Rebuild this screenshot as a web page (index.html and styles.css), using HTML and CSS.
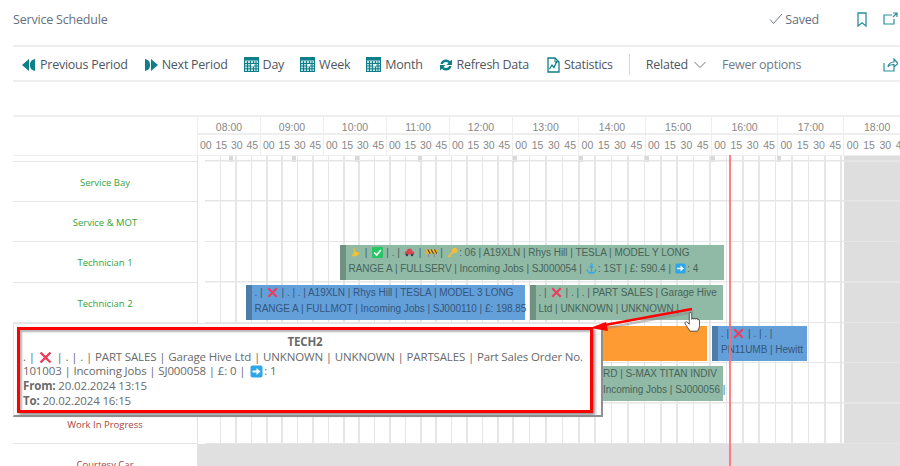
FILE: index.html
```html
<!DOCTYPE html>
<html lang="en">
<head>
    <meta charset="UTF-8">
    <meta name="viewport" content="width=device-width, initial-scale=1.0">
    <title>Service Schedule</title>
    <link rel="stylesheet" href="styles.css">
</head>
<body>
    <svg class="defs" width="0" height="0">
        <symbol id="i-cal" viewBox="0 0 15 15">
            <rect x="0.5" y="0.5" width="14" height="14" fill="#bfe0e2" stroke="#0e7f88"/>
            <rect x="0.5" y="0.5" width="14" height="3" fill="#0e7f88"/>
            <path d="M3.5 4v10M6.5 4v10M9.5 4v10M12 4v10M1 6.5h13M1 9h13M1 11.8h13" stroke="#0e7f88" stroke-width="1"/>
            <rect x="7" y="7" width="3" height="2.4" fill="#fff"/>
        </symbol>
        <symbol id="i-x" viewBox="0 0 13 13">
            <path d="M1.5 1.5l10 10M11.5 1.5l-10 10" stroke="#ef3b5c" stroke-width="2.4" fill="none"/>
        </symbol>
        <symbol id="i-go" viewBox="0 0 13 13">
            <rect x="0.5" y="0.5" width="12" height="12" rx="2" fill="#2ea6ea"/>
            <path d="M2.5 5.5h4V3l4 3.5-4 3.5V7.500h-4z" fill="#fff"/>
        </symbol>
    </svg>

    <div class="titlebar">
        <span class="page-title">Service Schedule</span>
        <span class="saved">
            <svg width="14" height="12" viewBox="0 0 14 12"><path d="M1 6.500l3.500 4L13 1" fill="none" stroke="#6d7784" stroke-width="1"/></svg>
            Saved
        </span>
        <svg class="top-icon" width="10" height="15" viewBox="0 0 10 15"><path d="M1 1h8v13L5 10.800 1 14z" fill="none" stroke="#2a8f99" stroke-width="1.300"/></svg>
        <svg class="top-icon last" width="15" height="14" viewBox="0 0 15 14"><path d="M9 3H1v9h10V7M10 1h4v4M14 1l-4 4" fill="none" stroke="#2a8f99" stroke-width="1.200"/></svg>
    </div>

    <div class="toolbar">
        <span class="tool"><svg width="14" height="12" viewBox="0 0 14 12"><path d="M7 0v12L0 6zM13 0v12c-4-1-5-3-5-6s1-5 5-6z" fill="#0e7f88"/></svg>Previous Period</span>
        <span class="tool"><svg width="14" height="12" viewBox="0 0 14 12"><path d="M7 0v12l7-6zM1 0v12c4-1 5-3 5-6S5 1 1 0z" fill="#0e7f88"/></svg>Next Period</span>
        <span class="tool"><svg width="15" height="15"><use href="#i-cal"/></svg>Day</span>
        <span class="tool"><svg width="15" height="15"><use href="#i-cal"/></svg>Week</span>
        <span class="tool"><svg width="15" height="15"><use href="#i-cal"/></svg>Month</span>
        <span class="tool"><svg width="14" height="14" viewBox="0 0 14 14"><path d="M1.500 6C2 3 4.300 1.500 7 1.500c1.700 0 3 .7 4 1.800L13 1.500V7H7.500l2-2C8.800 4.300 8 4 7 4 5.500 4 4.300 4.800 3.800 6zM12.500 8C12 11 9.700 12.500 7 12.500c-1.700 0-3-.7-4-1.800L1 12.500V7h5.500l-2 2c.7.700 1.500 1 2.500 1 1.500 0 2.700-.8 3.200-2z" fill="#0e7f88"/></svg>Refresh Data</span>
        <span class="tool stats"><svg width="13" height="16" viewBox="0 0 13 16"><path d="M1 1h7l4 4v10H1z" fill="#fff" stroke="#0e7f88" stroke-width="1.300"/><path d="M8 1v4h4" fill="none" stroke="#0e7f88"/><path d="M2.500 12l2.500-4 2 2.500L10 4" fill="none" stroke="#0e7f88" stroke-width="1.300"/></svg>Statistics</span>
        <span class="sep"></span>
        <span class="tool">Related<svg class="chev" width="12" height="7" viewBox="0 0 12 7"><path d="M.5 1L6 6.500 11.500 1" fill="none" stroke="#6d7784"/></svg></span>
        <span class="tool muted">Fewer options</span>
        <svg class="share" width="15" height="14" viewBox="0 0 15 14"><path d="M1 5v8h10V9M5 9c0-3 3-5 6-5V1l4 4.500L11 9V6.500C8.500 6.500 6 7 5 9z" fill="none" stroke="#2a8f99" stroke-width="1.200"/></svg>
    </div>

    <div class="schedule">
        <div class="sched-head">
            <div class="head-blank"></div>
            <div class="hour"><b>08:00</b><div class="mins"><i>00</i><i>15</i><i>30</i><i>45</i></div></div>
            <div class="hour"><b>09:00</b><div class="mins"><i>00</i><i>15</i><i>30</i><i>45</i></div></div>
            <div class="hour"><b>10:00</b><div class="mins"><i>00</i><i>15</i><i>30</i><i>45</i></div></div>
            <div class="hour"><b>11:00</b><div class="mins"><i>00</i><i>15</i><i>30</i><i>45</i></div></div>
            <div class="hour"><b>12:00</b><div class="mins"><i>00</i><i>15</i><i>30</i><i>45</i></div></div>
            <div class="hour wide"><b>13:00</b><div class="mins"><i>00</i><i>15</i><i>30</i><i>45</i></div></div>
            <div class="hour wide"><b>14:00</b><div class="mins"><i>00</i><i>15</i><i>30</i><i>45</i></div></div>
            <div class="hour wide"><b>15:00</b><div class="mins"><i>00</i><i>15</i><i>30</i><i>45</i></div></div>
            <div class="hour wide"><b>16:00</b><div class="mins"><i>00</i><i>15</i><i>30</i><i>45</i></div></div>
            <div class="hour wide"><b>17:00</b><div class="mins"><i>00</i><i>15</i><i>30</i><i>45</i></div></div>
            <div class="hour wide"><b>18:00</b><div class="mins"><i>00</i><i>15</i><i>30</i><i>45</i></div></div>
        </div>
        <div class="strip">
            <div class="strip-label"></div>
            <div class="strip-track"></div>
        </div>

        <div class="row">
            <div class="res green">Service Bay</div>
            <div class="track"></div>
        </div>
        <div class="row">
            <div class="res green">Service &amp; MOT</div>
            <div class="track"></div>
        </div>
        <div class="row">
            <div class="res green">Technician 1</div>
            <div class="track">
                <div class="job sage j-tech1">
                    <svg class="emo" width="13" height="13" viewBox="0 0 13 13"><path d="M4 1c1 4 1 6-2 9 4 3 9 0 9-4-2 1-4 0-5-1L5.500 1z" fill="#f2c230"/></svg> |
                    <svg class="emo" width="13" height="13" viewBox="0 0 13 13"><rect width="13" height="13" rx="1.500" fill="#25c763"/><path d="M2.500 6.500l3 3 5-6" fill="none" stroke="#fff" stroke-width="2"/></svg> | . |
                    <svg class="emo" width="13" height="13" viewBox="0 0 13 13"><path d="M3 5l1.500-3h4L10 5l2 1v3H1V6z" fill="#d9464f"/><circle cx="3.500" cy="9.500" r="1.500" fill="#345"/><circle cx="9.500" cy="9.500" r="1.500" fill="#345"/></svg> |
                    <svg class="emo" width="13" height="13" viewBox="0 0 13 13"><rect y="3" width="13" height="5" fill="#f0b429"/><path d="M2 3l3 5M6 3l3 5M10 3l3 5" stroke="#444" stroke-width="1.300"/><path d="M3 8v4M10 8v4" stroke="#888"/></svg> |
                    <svg class="emo" width="13" height="13" viewBox="0 0 13 13"><circle cx="9" cy="4" r="3.200" fill="#f2bd3a"/><path d="M7 6L1.500 11.500M3 10l1.500 1.500" stroke="#f2bd3a" stroke-width="2"/></svg>: 06 | A19XLN | Rhys Hill | TESLA | MODEL Y LONG<br>
                    RANGE A | FULLSERV | Incoming Jobs | SJ000054 |
                    <svg class="emo" width="13" height="13" viewBox="0 0 13 13"><path d="M6.500 3v9M4 5h5M1.500 7.500c0 3 2.500 4.500 5 4.500s5-1.500 5-4.500" fill="none" stroke="#2ea6ea" stroke-width="1.500"/><circle cx="6.500" cy="2" r="1.300" fill="none" stroke="#2ea6ea"/></svg>: 1ST | £: 590.4 |
                    <svg class="emo" width="13" height="13"><use href="#i-go"/></svg>: 4
                </div>
            </div>
        </div>
        <div class="row">
            <div class="res green">Technician 2</div>
            <div class="track">
                <div class="job blue j-tech2a">
                    . | <svg class="emo" width="13" height="13"><use href="#i-x"/></svg> | . | . | A19XLN | Rhys Hill | TESLA | MODEL 3 LONG<br>
                    RANGE A | FULLMOT | Incoming Jobs | SJ000110 | £: 198.85
                </div>
                <div class="job sage j-tech2b">
                    . | <svg class="emo" width="13" height="13"><use href="#i-x"/></svg> | . | . | PART SALES | Garage Hive<br>
                    Ltd | UNKNOWN | UNKNOWN |
                </div>
            </div>
        </div>
        <div class="row">
            <div class="res"></div>
            <div class="track">
                <div class="job orange j-row5a"></div>
                <div class="job blue j-row5b">
                    . | <svg class="emo" width="13" height="13"><use href="#i-x"/></svg> | . | . |<br>
                    PN11UMB | Hewitt
                </div>
            </div>
        </div>
        <div class="row">
            <div class="res"></div>
            <div class="track">
                <div class="job plain sage j-row6">RD | S-MAX TITAN INDIV<br>Incoming Jobs | SJ000056 |</div>
            </div>
        </div>
        <div class="row">
            <div class="res maroon">Work In Progress</div>
            <div class="track"></div>
        </div>
        <div class="row">
            <div class="res maroon">Courtesy Car</div>
            <div class="track closed"></div>
        </div>
        <div class="now-line"></div>
    </div>

    <div class="tooltip">
        <div class="tip-title">TECH2</div>
        . | <svg class="emo tip-x" width="13" height="13"><use href="#i-x"/></svg> | . | . | PART SALES | Garage Hive Ltd | UNKNOWN | UNKNOWN | PARTSALES | Part Sales Order No.<br>
        101003 | Incoming Jobs | SJ000058 | £: 0 | <svg class="emo" width="13" height="13"><use href="#i-go"/></svg>: 1<br>
        <b>From:</b> 20.02.2024 13:15<br>
        <b>To:</b> 20.02.2024 16:15
    </div>
    <div class="callout"></div>

    <svg class="pointer" width="125" height="45" viewBox="0 0 125 45">
        <path d="M107 5L20 21" stroke="#8a8a8a" stroke-width="2.500" opacity=".5" transform="translate(1 2)"/>
        <path d="M107 4L20 20" stroke="#f00" stroke-width="2.500"/>
        <path d="M5 23L21 17l2 9z" fill="#f00"/>
        <path d="M104 11v-3c0-1.500 3-1.500 3 0v7c0-1.500 2.500-1.500 2.500 0 0-1.500 2.500-1.500 2.500 0 0-1.500 2.500-1.500 2.500 0v1c0-1 2-1 2 .5v6c0 3-2 6-2.500 7h-9c-1-2-5-7-6-9-1-2 1-3 2.500-2l2.500 2.500z" fill="#fff" stroke="#222" stroke-width=".9" transform="translate(19 2) scale(.82)"/>
    </svg>
</body>
</html>
```
FILE: styles.css
```css
* {
    box-sizing: border-box;
}
html, body {
    height: 466px;
    overflow: hidden;
}
body {
    margin: 0;
    background: white;
    font-family: 'Open Sans', sans-serif;
    position: relative;
}
.defs {
    position: absolute;
}

/* top of page */
.titlebar {
    height: 45px;
    margin-left: 13px;
    display: flex;
    align-items: center;
    padding-bottom: 7px;
    color: #666f7d;
    font-size: 12.5px;
    letter-spacing: -0.2px;
}
.page-title {
    margin-right: auto;
}
.saved {
    display: flex;
    align-items: center;
    gap: 2px;
    margin-right: 38px;
}
.top-icon {
    margin-right: 16px;
}
.top-icon.last {
    margin-right: 2px;
}

.toolbar {
    height: 37px;
    margin-left: 13px;
    padding-left: 9px;
    padding-top: 2px;
    display: flex;
    align-items: center;
    gap: 16px;
    border-top: 2px solid #eeeeee;
    border-bottom: 2px solid #eeeeee;
    color: #4f5663;
    font-size: 12.5px;
    letter-spacing: -0.25px;
}
.tool {
    display: flex;
    align-items: center;
    gap: 4px;
    white-space: nowrap;
}
.tool.stats {
    margin-left: 2px;
}
.tool.muted {
    color: #6f7b8a;
}
.chev {
    margin-left: 2px;
}
.sep {
    width: 1px;
    height: 21px;
    background: #d4d4d4;
}
.share {
    margin-left: auto;
    margin-right: 2px;
}

/* schedule */
.schedule {
    position: relative;
    margin-top: 33px;
    margin-left: 13px;
    border-top: 2px solid #eeeeee;
    color: #888888;
    font-family: 'Liberation Sans', sans-serif;
}
.sched-head {
    display: flex;
    height: 39px;
    border-bottom: 1.500px solid #eeeeee;
}
.head-blank {
    width: 184px;
    flex: none;
}
.hour {
    width: 63px;
    flex: none;
    border-left: 1.500px solid #eeeeee;
    font-size: 10.5px;
}
.hour.wide {
    width: 66.300px;
}
.hour b {
    display: block;
    height: 18px;
    font-weight: normal;
    line-height: 21px;
    text-align: center;
    border-bottom: 2px solid #eeeeee;
}
.mins {
    display: flex;
    height: 19px;
}
.mins i {
    flex: 1;
    font-style: normal;
    line-height: 21px;
    text-align: center;
}

.strip {
    display: flex;
    height: 5.500px;
}
.strip-label {
    width: 184px;
    border-bottom: 1.500px solid #e6e6e6;
}
.strip-track {
    flex: 1;
    border-left: 1.500px solid #e2e2e2;
    background:
        linear-gradient(#e6e6e6, #e6e6e6) 7px 100% / 100% 1.500px no-repeat,
        repeating-linear-gradient(to right, #d9d9d9 0 4px, transparent 4px 63px) 31px 0 / 252px 100% no-repeat,
        repeating-linear-gradient(to right, #d9d9d9 0 4px, transparent 4px 66px) 315px 0 / 268px 100% no-repeat,
        linear-gradient(#dedede, #dedede) right / 56px 100% no-repeat,
        repeating-linear-gradient(to right, transparent 0 13.900px, #e6e6e6 13.900px 15.400px) 8px 0 / 308px 100% no-repeat,
        repeating-linear-gradient(to right, transparent 0 14.900px, #e6e6e6 14.900px 16.400px) 316px 0 / 328px 100% no-repeat;
}

.row {
    display: flex;
    height: 40.400px;
}
.res {
    width: 184px;
    flex: none;
    display: flex;
    align-items: center;
    justify-content: center;
    padding-top: 2px;
    border-bottom: 1.500px solid #e6e6e6;
    font-family: 'Open Sans', sans-serif;
    font-size: 9.500px;
}
.res.green {
    color: #36a336;
}
.res.maroon {
    color: #a54444;
}
.track {
    flex: 1;
    position: relative;
    border-left: 1.500px solid #e2e2e2;
    background:
        linear-gradient(#e6e6e6, #e6e6e6) 7px 100% / 100% 1.500px no-repeat,
        linear-gradient(#dedede, #dedede) right / 56px 100% no-repeat,
        repeating-linear-gradient(to right, transparent 0 13.900px, #e6e6e6 13.900px 15.400px) 8px 0 / 308px 100% no-repeat,
        repeating-linear-gradient(to right, transparent 0 14.900px, #e6e6e6 14.900px 16.400px) 316px 0 / 328px 100% no-repeat;
}
.track.closed {
    background: #e0e0e0;
}
.now-line {
    position: absolute;
    left: 716px;
    top: 38px;
    bottom: 0;
    width: 1.500px;
    background: #ff6b70;
    opacity: 0.85;
}

/* bookings sit on the time grid */
.job {
    position: absolute;
    top: 2.500px;
    height: 35px;
    padding-left: 2.500px;
    border-left: 6px solid rgba(0, 0, 0, 0.22);
    font-size: 10px;
    letter-spacing: -0.03px;
    line-height: 16px;
    white-space: nowrap;
}
.job.plain {
    border-left: none;
}
.sage {
    background: #90b9a6;
    color: #48655a;
}
.blue {
    background: #639fd9;
    color: #34577c;
}
.orange {
    background: #ff9b32;
}
.j-tech1 {
    left: 142px;
    width: 384px;
}
.j-tech2a {
    left: 48px;
    width: 279px;
}
.j-tech2b {
    left: 332px;
    width: 193px;
}
.j-row5a {
    left: 340px;
    width: 169px;
}
.j-row5b {
    left: 514px;
    width: 95px;
    padding-left: 3px;
}
.j-row6 {
    left: 400px;
    width: 125px;
    padding-left: 5px;
}
.emo {
    width: 11px;
    height: 11px;
    vertical-align: -2px;
    margin: 0 1px 0 1.500px;
}

/* hover popup with the annotation drawn over it */
.tooltip {
    position: absolute;
    left: 13px;
    top: 323px;
    width: 590px;
    height: 94px;
    padding: 11px 8px 0 9px;
    background: white;
    border: 1px solid #e4e4e4;
    border-right: 2px solid #8f8f8f;
    border-bottom: 2px solid #8f8f8f;
    color: #6a6a6a;
    font-size: 11.500px;
    letter-spacing: -0.15px;
    line-height: 14.700px;
    white-space: nowrap;
}
.tooltip .emo {
    width: 13px;
    height: 13px;
    margin: 0 1.500px;
    vertical-align: -2.500px;
}
.tooltip .tip-x {
    vertical-align: -3px;
}
.tip-title {
    text-align: center;
    font-weight: bold;
    margin-right: 6px;
}
.callout {
    position: absolute;
    left: 17px;
    top: 327px;
    width: 576px;
    height: 86px;
    border: 3px solid #f00;
    box-shadow: 2px 2px 3px #888888, inset 2px 2px 2px #b5b5b5;
}
.pointer {
    position: absolute;
    left: 585px;
    top: 305px;
}
```
